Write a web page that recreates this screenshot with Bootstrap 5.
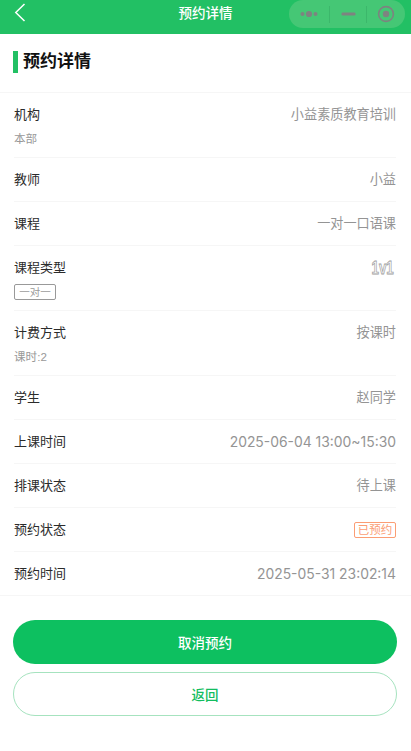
<!DOCTYPE html>
<html lang="zh">
<head>
<meta charset="utf-8">
<meta name="viewport" content="width=device-width, initial-scale=1">
<link rel="stylesheet" href="https://cdn.jsdelivr.net/npm/bootstrap@5.3.0/dist/css/bootstrap.min.css">
<style>
html,body{height:751px;overflow:hidden}
body{background:#fff;font-family:"Liberation Sans","Noto Sans CJK SC",sans-serif;color:#333}
.topbar{height:34px;background:#22c064}
.back-ico{left:13px;top:2px;width:14px;height:20px}
.top-title{left:0;right:0;top:5px;text-align:center;color:#fff;font-size:13.500px;line-height:18px;font-weight:500}
.capsule{right:6px;top:0;width:116px;height:28px;background:#45c775;border-radius:14px}
.cap-a{width:40px;height:100%}
.cap-b{width:36px;height:100%}
.cap-c{width:38px;height:100%}
.cap-sep{width:1px;height:17px;background:#3cb76b}
.head-block{height:59px;padding:0 0 3px 13px;border-bottom:1px solid #f6f6f6}
.head-bar{width:5px;height:22px;background:#22c064;margin-right:5px}
.head-text{font-size:17px;font-weight:600;color:#111;line-height:22px}
.info-row{margin-left:14px;margin-right:15px;border-bottom:1px solid #f6f6f6;padding-top:13px}
.row-short{height:44px}
.row-tall{height:65px}
.row-first{height:65px}
.row-last{margin-left:0;margin-right:0;padding-left:14px;padding-right:15px}
.lbl{font-size:13px;line-height:18px;color:#2b2b2b}
.val{font-size:13.150px;line-height:18px;color:#949494}
.val-num{font-family:Inter,"Liberation Sans",sans-serif;font-size:13.900px}
.sub-text{font-size:11.600px;line-height:14px;color:#999;margin-top:8px}
.tag-gray{display:block;width:42px;height:16px;margin-top:7px;border:1px solid #999;border-radius:2px;font-size:10.500px;line-height:14px;color:#999;text-align:center}
.tag-orange{width:42px;height:16px;border:1px solid #fb9d74;border-radius:2px;font-size:11.500px;line-height:14px;color:#fb9d74;text-align:center;margin-top:1px}
.outline-num{display:inline-block;font-size:19px;line-height:18px;font-weight:700;color:#fff;-webkit-text-stroke:.9px #a0a0a0;transform:scaleX(.7);transform-origin:right center;margin-top:0;margin-right:2px}
.action-wrap{padding:24px 14px 0 13px}
.btn-fill{height:44px;width:100%;background:#0dc060;border:0;border-radius:22px;color:#fff;font-size:13.500px;font-weight:500;padding-top:9px;padding-bottom:5px}
.btn-line{height:44px;width:100%;background:#fff;border:1px solid #a6e3bf;border-radius:22px;color:#13bd5f;font-size:13.500px;font-weight:500;margin-top:8px;padding-top:9px;padding-bottom:5px}
</style>
</head>
<body>
<div class="topbar position-relative">
  <svg class="back-ico position-absolute" viewBox="0 0 14 20" fill="none" stroke="#fff" stroke-width="1.500"><path d="M11.500 2 2.800 10.500 11.500 19"/></svg>
  <div class="top-title position-absolute">预约详情</div>
  <div class="capsule position-absolute d-flex align-items-center">
    <div class="cap-a d-flex align-items-center justify-content-center">
      <svg width="20" height="8" viewBox="0 0 20 8" fill="#7e8380"><circle cx="3.500" cy="4" r="2"/><circle cx="10" cy="4" r="3.100"/><circle cx="16.500" cy="4" r="2"/></svg>
    </div>
    <div class="cap-sep"></div>
    <div class="cap-b d-flex align-items-center justify-content-center">
      <svg width="15" height="4" viewBox="0 0 15 4" fill="#7e8380"><rect x="0.500" y="0.500" width="14" height="3" rx="1.200"/></svg>
    </div>
    <div class="cap-sep"></div>
    <div class="cap-c d-flex align-items-center justify-content-center">
      <svg width="18" height="18" viewBox="0 0 18 18"><circle cx="9" cy="9" r="7.400" fill="none" stroke="#7e8380" stroke-width="1.600"/><circle cx="9" cy="9" r="3.200" fill="#7e8380"/></svg>
    </div>
  </div>
</div>

<div class="head-block d-flex align-items-center">
  <div class="head-bar"></div>
  <div class="head-text">预约详情</div>
</div>

<div class="info-row row-first">
  <div class="d-flex justify-content-between"><span class="lbl">机构</span><span class="val">小益素质教育培训</span></div>
  <div class="sub-text">本部</div>
</div>
<div class="info-row row-short d-flex justify-content-between"><span class="lbl">教师</span><span class="val">小益</span></div>
<div class="info-row row-short d-flex justify-content-between"><span class="lbl">课程</span><span class="val">一对一口语课</span></div>
<div class="info-row row-tall">
  <div class="d-flex justify-content-between"><span class="lbl">课程类型</span><span class="outline-num">1v1</span></div>
  <span class="tag-gray">一对一</span>
</div>
<div class="info-row row-tall">
  <div class="d-flex justify-content-between"><span class="lbl">计费方式</span><span class="val">按课时</span></div>
  <div class="sub-text">课时:2</div>
</div>
<div class="info-row row-short d-flex justify-content-between"><span class="lbl">学生</span><span class="val">赵同学</span></div>
<div class="info-row row-short d-flex justify-content-between"><span class="lbl">上课时间</span><span class="val val-num">2025-06-04 13:00~15:30</span></div>
<div class="info-row row-short d-flex justify-content-between"><span class="lbl">排课状态</span><span class="val">待上课</span></div>
<div class="info-row row-short d-flex justify-content-between"><span class="lbl">预约状态</span><span class="tag-orange">已预约</span></div>
<div class="info-row row-short row-last d-flex justify-content-between"><span class="lbl">预约时间</span><span class="val val-num">2025-05-31 23:02:14</span></div>

<div class="action-wrap">
  <button type="button" class="btn btn-fill d-block">取消预约</button>
  <button type="button" class="btn btn-line d-block">返回</button>
</div>
<script src="https://cdn.jsdelivr.net/npm/bootstrap@5.3.0/dist/js/bootstrap.bundle.min.js"></script>
</body>
</html>
